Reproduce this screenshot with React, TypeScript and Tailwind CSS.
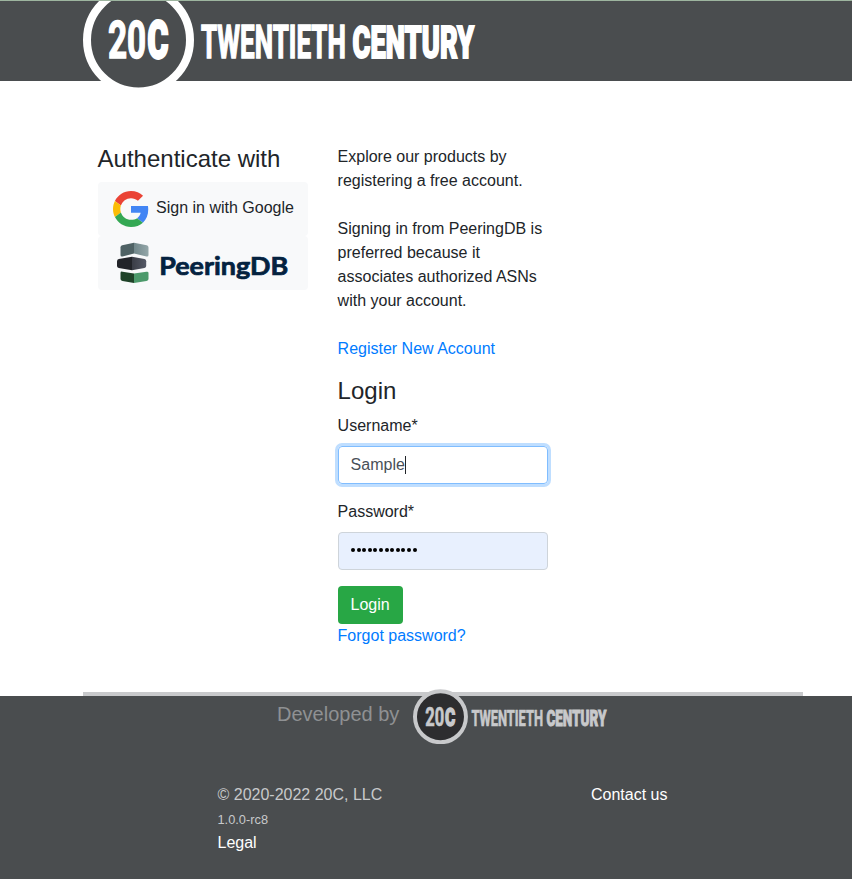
import React from "react";

type BrandProps = {
  className: string;
  color: string;
  fill: string;
};

function BrandLogo({ className, color, fill }: BrandProps) {
  return (
    <svg className={className} viewBox="0 0 394 112" role="img" aria-label="20C Twentieth Century">
      <circle cx="55.5" cy="56" r="51.5" fill={fill} stroke={color} strokeWidth="8" />
      <g fill={color} stroke={color} fontFamily="Roboto, 'Liberation Sans', sans-serif" strokeLinejoin="miter">
        <text transform="translate(25 74.2) scale(.64 1)" fontSize="52" fontWeight="700" strokeWidth="1.4">20</text>
        <text transform="translate(64.5 74.2) scale(.61 1)" fontSize="52" fontWeight="900" strokeWidth="2.8">C</text>
        <text transform="translate(118 73.9) scale(.572 1)" fontSize="45.5" fontWeight="700" strokeWidth="1.5">TWENTIETH</text>
        <text transform="translate(269.500 73.9) scale(.607 1)" fontSize="45" fontWeight="900" strokeWidth="2">CENTURY</text>
      </g>
    </svg>
  );
}

function GoogleIcon() {
  return (
    <svg className="h-9 w-9 shrink-0" viewBox="0 0 48 48" aria-hidden="true">
      <path fill="#EA4335" d="M24 9.5c3.54 0 6.71 1.22 9.21 3.6l6.85-6.85C35.9 2.38 30.47 0 24 0 14.62 0 6.51 5.38 2.56 13.22l7.98 6.19C12.43 13.72 17.74 9.5 24 9.5z" />
      <path fill="#4285F4" d="M46.98 24.55c0-1.57-.15-3.09-.38-4.55H24v9.02h12.94c-.58 2.96-2.26 5.48-4.78 7.18l7.73 6c4.51-4.18 7.09-10.36 7.09-17.65z" />
      <path fill="#FBBC05" d="M10.53 28.59c-.48-1.45-.76-2.99-.76-4.59s.27-3.14.76-4.59l-7.98-6.19C.92 16.46 0 20.12 0 24c0 3.88.92 7.54 2.56 10.78l7.97-6.19z" />
      <path fill="#34A853" d="M24 48c6.48 0 11.93-2.13 15.89-5.81l-7.73-6c-2.15 1.45-4.92 2.3-8.16 2.3-6.26 0-11.57-4.22-13.47-9.91l-7.98 6.19C6.51 42.62 14.62 48 24 48z" />
    </svg>
  );
}

function PeeringDbLogo() {
  return (
    <svg className="h-[54px] w-[210px]" viewBox="0 0 210 54" role="img" aria-label="PeeringDB">
      <defs>
        <linearGradient id="pdbTop"><stop stopColor="#71878a" /><stop offset="1" stopColor="#94a7a9" /></linearGradient>
        <linearGradient id="pdbMid"><stop stopColor="#3a3d46" /><stop offset="1" stopColor="#555966" /></linearGradient>
      </defs>
      <path fill="#4f6264" d="M22.500 11.500q0-1.700 1.700-2.200L36 6.700V17.500l-11.500 3q-2 .5-2-1.500z" />
      <path fill="url(#pdbTop)" d="m36 6.700 12.700 2.600q1.800.5 1.800 2.200V19q0 2-2 1.500L36 17.500z" />
      <path fill="#222429" d="M19 25.500q0-2 1.800-2.400L34 20.700V34.200L20.800 32q-1.800-.3-1.800-2z" />
      <path fill="url(#pdbMid)" d="m34 20.700 12.500 2.400q1.700.4 1.700 2.200V30q0 1.700-1.700 2L34 34.200z" />
      <path fill="#1e4228" d="M22.500 37q0-1.700 2-1.300L36 37.400V47l-11.500-2q-2-.4-2-2z" />
      <path fill="#4b996a" d="m36 37.400 12.500-1.700q2-.3 2 1.300v6q0 1.600-2 2L36 47z" />
      <text x="61.200" y="38.500" fontFamily="Lato, sans-serif" fontWeight="700" fontSize="24.500" fill="#04223f" stroke="#04223f" strokeWidth="0.7" textLength="129" lengthAdjust="spacingAndGlyphs">PeeringDB</text>
    </svg>
  );
}

export default function App() {
  return (
    <div className="flex h-[879px] w-full flex-col overflow-hidden bg-white font-['Liberation_Sans',Arial,sans-serif] text-base text-[#212529]">
      <header className="h-[81px] border-t border-[#9db59f] bg-[#4a4d4f]">
        <div className="h-[95px] overflow-hidden pl-[83px]">
          <BrandLogo className="-mt-[17px] h-28 w-[394px]" color="#ffffff" fill="#4a4d4f" />
        </div>
      </header>

      <main className="ml-[82.6px] flex h-[611px] w-[720px] pt-16">
        <section className="w-60 px-[15px]">
          <h4 className="mb-[9px] whitespace-nowrap text-2xl leading-7">Authenticate with</h4>
          <button className="flex h-[54px] w-[210px] items-center rounded bg-[#f8f9fa] pl-[15px]">
            <GoogleIcon />
            <span className="-mt-0.5 ml-[7.5px] whitespace-nowrap">Sign in with Google</span>
          </button>
          <button className="block h-[54px] w-[210px] rounded bg-[#f8f9fa]">
            <PeeringDbLogo />
          </button>
        </section>

        <section className="w-60 px-[15px]">
          <p className="mb-6">Explore our products by registering a free account.</p>
          <p className="mb-6">Signing in from PeeringDB is preferred because it associates authorized ASNs with your account.</p>
          <a className="mb-[15px] block whitespace-nowrap text-[#007bff]">Register New Account</a>
          <h4 className="mb-[9px] text-2xl leading-[29px]">Login</h4>
          <form>
            <label className="mb-2 block">Username*</label>
            <div className="mb-4 flex h-[38px] items-center rounded border border-[#80bdff] px-3 text-[#495057] ring-3 ring-[#bfdeff]">
              <span>Sample</span>
              <span className="h-[18px] w-px bg-[#212529]" />
            </div>
            <label className="mb-2 block">Password*</label>
            <div className="mb-4 flex h-[38px] items-center gap-[1.6px] rounded border border-[#ced4da] bg-[#e8f0fe] px-[12.5px] pb-0.5">
              {Array.from({ length: 12 }, (_, i) => (
                <span key={i} className="h-1 w-1 rounded-full bg-black" />
              ))}
            </div>
            <button type="button" className="block h-[38px] w-[65px] rounded bg-[#28a745] text-white">Login</button>
            <a className="block text-[#007bff]">Forgot password?</a>
          </form>
        </section>
      </main>

      <div className="ml-[83px] h-1 w-[720px] shrink-0 bg-[#c8c9cb]" />
      <footer className="flex-1 bg-[#4a4d4f] text-[#c8c9cb]">
        <div className="flex h-[87px] pl-[277px]">
          <span className="mt-1 w-[135.5px] text-xl leading-7 text-[#8f9193]">Developed by</span>
          <BrandLogo className="-mt-[7.5px] h-[55.5px] w-[195px]" color="#c8c9cb" fill="#2d2d2f" />
        </div>
        <div className="flex pl-[217.5px]">
          <div className="w-[373.5px]">
            <div>© 2020-2022 20C, LLC</div>
            <div className="h-6 pt-px text-[12.8px] leading-6">1.0.0-rc8</div>
            <a className="block text-white">Legal</a>
          </div>
          <a className="text-white">Contact us</a>
        </div>
      </footer>
    </div>
  );
}
